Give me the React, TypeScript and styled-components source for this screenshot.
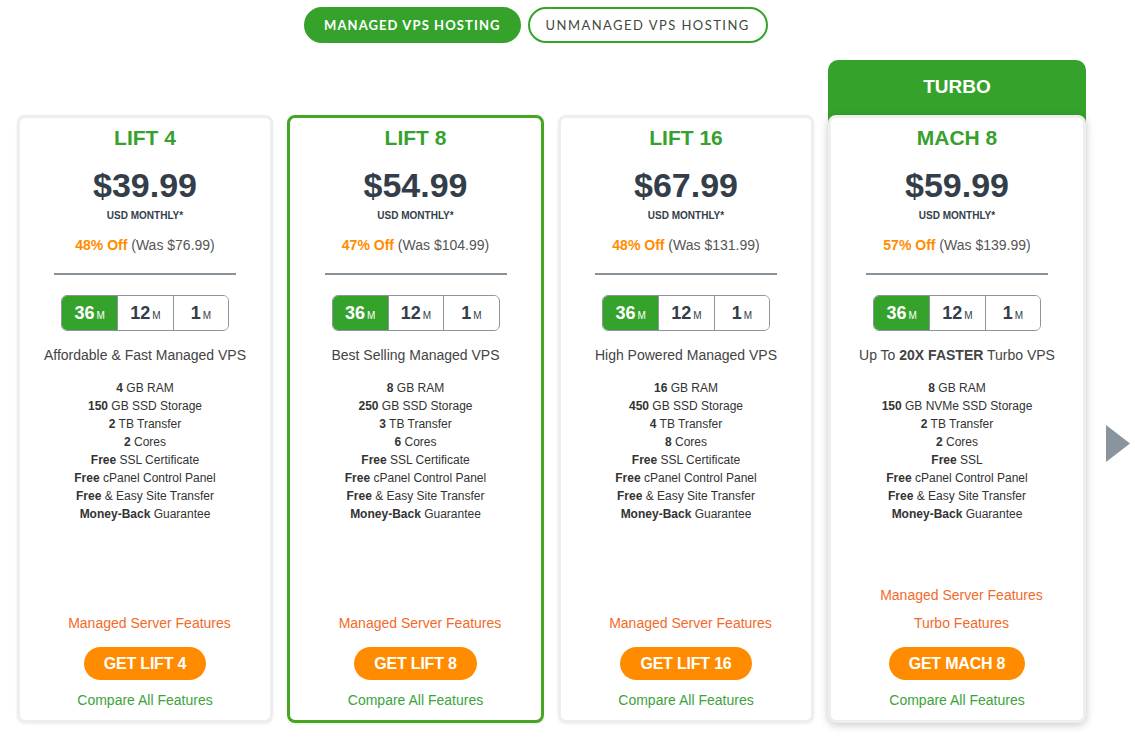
import React from "react";
import styled, { createGlobalStyle } from "styled-components";

const Global = createGlobalStyle`
  html, body { margin: 0; padding: 0; background: #ffffff; }
  body { font-family: "Liberation Sans", Arial, sans-serif; }
  * { box-sizing: border-box; }
`;

const Page = styled.div`
  width: 1135px;
  height: 738px;
  padding-top: 7px;
  overflow: hidden;
`;

const TabsRow = styled.div`
  display: flex;
  gap: 7px;
  padding-left: 304px;
`;

const Tab = styled.button<{ $active?: boolean }>`
  height: 36px;
  padding: 0 ${(p) => (p.$active ? 18 : 16)}px;
  border-radius: 18px;
  border: 2px solid #35a32b;
  background: ${(p) => (p.$active ? "#35a32b" : "#ffffff")};
  color: ${(p) => (p.$active ? "#ffffff" : "#3e4a3c")};
  font-family: "Lato", "Liberation Sans", sans-serif;
  font-weight: ${(p) => (p.$active ? 700 : 400)};
  font-size: 13px;
  letter-spacing: ${(p) => (p.$active ? "1.1px" : "1.45px")};
  text-transform: uppercase;
  cursor: pointer;
`;

const Row = styled.div`
  display: flex;
  align-items: flex-end;
  gap: 14px;
  padding-left: 17px;
  margin-top: 17px;
`;

const Column = styled.div`
  display: flex;
  flex-direction: column;
`;

const TurboHead = styled.div`
  height: 63px;
  margin-bottom: -8px;
  background: #35a32b;
  border-radius: 10px 10px 0 0;
  color: #ffffff;
  font-weight: 700;
  font-size: 19px;
  text-align: center;
  padding-top: 16px;
`;

const Card = styled.div<{ $featured?: boolean; $turbo?: boolean; $w: number }>`
  position: relative;
  width: ${(p) => p.$w}px;
  height: 608px;
  background: #ffffff;
  border: 3px solid ${(p) => (p.$featured ? "#47a620" : "#eeeeee")};
  border-radius: 8px;
  box-shadow: ${(p) =>
    p.$turbo ? "0 2px 8px rgba(0,0,0,0.22)" : "0 1px 3px rgba(0,0,0,0.08)"};
  display: flex;
  flex-direction: column;
  align-items: center;
  padding-bottom: 11px;
`;

const Title = styled.div`
  margin-top: 8px;
  font-size: 21px;
  line-height: 24px;
  font-weight: 700;
  color: #36a12d;
`;

const Price = styled.div`
  margin-top: 15px;
  font-size: 34px;
  line-height: 40px;
  font-weight: 700;
  color: #333e4a;
`;

const Period = styled.div`
  margin-top: 5px;
  font-size: 10px;
  line-height: 12px;
  font-weight: 700;
  color: #333e4a;
`;

const Discount = styled.div`
  margin-top: 14px;
  font-size: 14px;
  line-height: 18px;
  color: #555555;
  b { color: #ff8c00; }
`;

const Divider = styled.div`
  margin-top: 19px;
  width: 182px;
  height: 2px;
  background: #8a9299;
`;

const Terms = styled.div`
  margin-top: 20px;
  width: 168px;
  height: 36px;
  border: 1px solid #8c959d;
  border-radius: 6px;
  overflow: hidden;
  display: grid;
  grid-template-columns: 1fr 1fr 1fr;
`;

const Term = styled.div<{ $active?: boolean }>`
  display: flex;
  align-items: baseline;
  justify-content: center;
  padding-top: 6px;
  background: ${(p) => (p.$active ? "#35a32b" : "#ffffff")};
  color: ${(p) => (p.$active ? "#ffffff" : "#333e4a")};
  & + & { border-left: 1px solid #8c959d; }
  b { font-size: 18px; line-height: 22px; font-weight: 700; }
  span { font-size: 10px; margin-left: 2px; }
`;

const Desc = styled.div`
  margin-top: 16px;
  font-size: 14px;
  line-height: 16px;
  color: #444444;
  b { color: #444444; }
`;

const Features = styled.ul`
  list-style: none;
  margin: 16px 0 0;
  padding: 0;
  text-align: center;
  font-size: 12px;
  line-height: 18px;
  color: #333333;
  b { font-weight: 700; }
`;

const Bottom = styled.div`
  margin-top: auto;
  display: flex;
  flex-direction: column;
  align-items: center;
  gap: 10px;
`;

const OrangeLink = styled.a`
  padding-left: 9px;
  font-size: 14px;
  line-height: 18px;
  color: #f26a2b;
  text-decoration: none;
`;

const Buy = styled.button`
  margin-top: 5px;
  height: 33px;
  padding: 0 20px;
  border: none;
  border-radius: 17px;
  background: #ff8c00;
  color: #ffffff;
  font-family: "Liberation Sans", Arial, sans-serif;
  font-weight: 700;
  font-size: 16px;
  letter-spacing: -0.2px;
  cursor: pointer;
`;

const GreenLink = styled.a`
  margin-top: 1px;
  font-size: 14px;
  line-height: 18px;
  color: #3ca33a;
  text-decoration: none;
`;

const ArrowWrap = styled.div`
  margin-left: 6px;
  margin-bottom: 261px;
  width: 24px;
  height: 37px;
`;

type Plan = {
  name: string;
  price: string;
  off: string;
  was: string;
  desc: React.ReactNode;
  features: React.ReactNode[];
  links: string[];
  buy: string;
  featured?: boolean;
  turbo?: boolean;
  w: number;
};

const plans: Plan[] = [
  {
    name: "LIFT 4",
    price: "$39.99",
    off: "48% Off",
    was: "(Was $76.99)",
    desc: "Affordable & Fast Managed VPS",
    features: [
      <><b>4</b> GB RAM</>,
      <><b>150</b> GB SSD Storage</>,
      <><b>2</b> TB Transfer</>,
      <><b>2</b> Cores</>,
      <><b>Free</b> SSL Certificate</>,
      <><b>Free</b> cPanel Control Panel</>,
      <><b>Free</b> &amp; Easy Site Transfer</>,
      <><b>Money-Back</b> Guarantee</>,
    ],
    links: ["Managed Server Features"],
    buy: "GET LIFT 4",
    w: 256,
  },
  {
    name: "LIFT 8",
    price: "$54.99",
    off: "47% Off",
    was: "(Was $104.99)",
    desc: "Best Selling Managed VPS",
    features: [
      <><b>8</b> GB RAM</>,
      <><b>250</b> GB SSD Storage</>,
      <><b>3</b> TB Transfer</>,
      <><b>6</b> Cores</>,
      <><b>Free</b> SSL Certificate</>,
      <><b>Free</b> cPanel Control Panel</>,
      <><b>Free</b> &amp; Easy Site Transfer</>,
      <><b>Money-Back</b> Guarantee</>,
    ],
    links: ["Managed Server Features"],
    buy: "GET LIFT 8",
    featured: true,
    w: 257,
  },
  {
    name: "LIFT 16",
    price: "$67.99",
    off: "48% Off",
    was: "(Was $131.99)",
    desc: "High Powered Managed VPS",
    features: [
      <><b>16</b> GB RAM</>,
      <><b>450</b> GB SSD Storage</>,
      <><b>4</b> TB Transfer</>,
      <><b>8</b> Cores</>,
      <><b>Free</b> SSL Certificate</>,
      <><b>Free</b> cPanel Control Panel</>,
      <><b>Free</b> &amp; Easy Site Transfer</>,
      <><b>Money-Back</b> Guarantee</>,
    ],
    links: ["Managed Server Features"],
    buy: "GET LIFT 16",
    w: 256,
  },
  {
    name: "MACH 8",
    price: "$59.99",
    off: "57% Off",
    was: "(Was $139.99)",
    desc: <>Up To <b>20X FASTER</b> Turbo VPS</>,
    features: [
      <><b>8</b> GB RAM</>,
      <><b>150</b> GB NVMe SSD Storage</>,
      <><b>2</b> TB Transfer</>,
      <><b>2</b> Cores</>,
      <><b>Free</b> SSL</>,
      <><b>Free</b> cPanel Control Panel</>,
      <><b>Free</b> &amp; Easy Site Transfer</>,
      <><b>Money-Back</b> Guarantee</>,
    ],
    links: ["Managed Server Features", "Turbo Features"],
    buy: "GET MACH 8",
    turbo: true,
    w: 258,
  },
];

function PlanCard({ p }: { p: Plan }) {
  return (
    <Card $featured={p.featured} $turbo={p.turbo} $w={p.w}>
      <Title>{p.name}</Title>
      <Price>{p.price}</Price>
      <Period>USD MONTHLY*</Period>
      <Discount>
        <b>{p.off}</b> {p.was}
      </Discount>
      <Divider />
      <Terms>
        <Term $active>
          <b>36</b>
          <span>M</span>
        </Term>
        <Term>
          <b>12</b>
          <span>M</span>
        </Term>
        <Term>
          <b>1</b>
          <span>M</span>
        </Term>
      </Terms>
      <Desc>{p.desc}</Desc>
      <Features>
        {p.features.map((f, i) => (
          <li key={i}>{f}</li>
        ))}
      </Features>
      <Bottom>
        {p.links.map((l) => (
          <OrangeLink key={l} href="#">
            {l}
          </OrangeLink>
        ))}
        <Buy>{p.buy}</Buy>
        <GreenLink href="#">Compare All Features</GreenLink>
      </Bottom>
    </Card>
  );
}

export default function App() {
  return (
    <>
      <Global />
      <Page>
        <TabsRow>
          <Tab $active>Managed VPS Hosting</Tab>
          <Tab>Unmanaged VPS Hosting</Tab>
        </TabsRow>
        <Row>
          {plans.map((p) =>
            p.turbo ? (
              <Column key={p.name}>
                <TurboHead>TURBO</TurboHead>
                <PlanCard p={p} />
              </Column>
            ) : (
              <PlanCard key={p.name} p={p} />
            )
          )}
          <ArrowWrap>
            <svg width="24" height="37" viewBox="0 0 24 37">
              <polygon points="0,0 24,18.5 0,37" fill="#8a949e" />
            </svg>
          </ArrowWrap>
        </Row>
      </Page>
    </>
  );
}
